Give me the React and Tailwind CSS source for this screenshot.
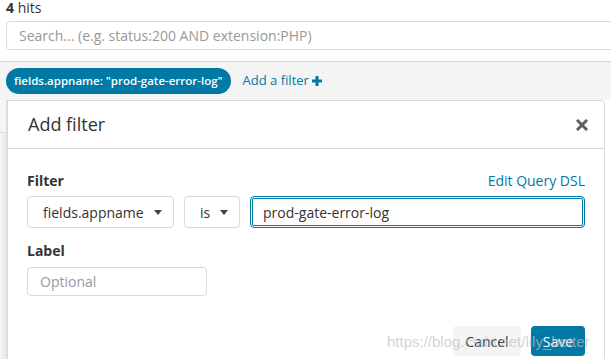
import React from "react";

const Caret = () => (
  <svg width="8" height="5" viewBox="0 0 8 5" className="shrink-0">
    <path d="M0 0h8L4 5z" fill="#444" />
  </svg>
);

const CloseIcon = () => (
  <svg width="12" height="12" viewBox="0 0 12 12">
    <path
      d="M2 2l8 8M10 2l-8 8"
      stroke="#5f5f5f"
      strokeWidth="3"
      strokeLinecap="square"
    />
  </svg>
);

const PlusIcon = () => (
  <svg width="10" height="10" viewBox="0 0 10 10" className="ml-[3px]">
    <path d="M5 0v10M0 5h10" stroke="#0079a5" strokeWidth="3" />
  </svg>
);

const App = () => {
  return (
    <div
      className="relative w-[611px] h-[359px] overflow-hidden bg-white text-[#333]"
      style={{ fontFamily: '"Open Sans", "Noto Sans", sans-serif' }}
    >
      <div className="px-[6px]">
        <div className="text-[14px] leading-[15px]">
          <span className="font-bold">4</span> hits
        </div>
        <div className="mt-[6px] w-[640px] h-[29px] border border-[#d9d9d9] rounded-[4px] flex items-center pl-[12px] text-[14px] text-[#999]">
          Search... (e.g. status:200 AND extension:PHP)
        </div>
      </div>

      <div className="mt-[11px] h-[39px] border-t border-[#d9d9d9] bg-[#f4f4f4] flex items-center px-[6px]">
        <div className="h-[26px] rounded-full bg-[#0079a5] text-white text-[11.5px] font-semibold flex items-center px-[8px] whitespace-nowrap">
          fields.appname: "prod-gate-error-log"
        </div>
        <div className="ml-[12px] flex items-center text-[13px] text-[#0079a5]">
          Add a filter
          <PlusIcon />
        </div>
      </div>

      <div className="flex h-[260px]">
        <div className="w-[7px] shrink-0 bg-gradient-to-r from-[#f7f7f7] to-[#e4e4e4] flex flex-col">
          <div className="h-[33px] border-b border-r border-[#dcdcdc] bg-[#f5f5f5]" />
        </div>
        <div className="w-[598px] shrink-0 border-l border-r border-t border-[#d9d9d9] rounded-tr-[4px] bg-white">
          <div className="h-[48px] border-b border-[#d9d9d9] flex items-center justify-between pl-[20px] pr-[16px]">
            <div className="text-[18px]">Add filter</div>
            <CloseIcon />
          </div>
          <div className="px-[19px] pt-[22px]">
            <div className="flex items-center justify-between text-[14px] leading-[20px]">
              <div className="font-bold">Filter</div>
              <div className="text-[#0079a5]">Edit Query DSL</div>
            </div>
            <div className="mt-[5px] flex gap-[10px] h-[32px] text-[14px]">
              <div className="w-[147px] border border-[#d9d9d9] rounded-[4px] flex items-center justify-between pl-[15px] pr-[11px]">
                fields.appname
                <Caret />
              </div>
              <div className="w-[56px] border border-[#d9d9d9] rounded-[4px] flex items-center justify-between pl-[15px] pr-[11px]">
                is
                <Caret />
              </div>
              <div className="flex-1 border border-[#0079a5] rounded-[4px] shadow-[inset_0_0_0_1px_#fff,inset_0_0_0_2px_#0079a5] flex items-center pl-[12px] text-[#333]">
                prod-gate-error-log
              </div>
            </div>
            <div className="mt-[13px] text-[14px] leading-[20px] font-bold">Label</div>
            <div className="mt-[6px] w-[180px] h-[29px] border border-[#d9d9d9] rounded-[4px] flex items-center pl-[12px] text-[14px] text-[#999]">
              Optional
            </div>
            <div className="mt-[30px] flex justify-end gap-[10px] text-[14px]">
              <div className="h-[30px] w-[68px] rounded-[4px] bg-[#f4f4f4] flex items-center justify-center">
                Cancel
              </div>
              <div className="h-[30px] w-[54px] rounded-[4px] bg-[#0079a5] text-white flex items-center justify-center">
                Save
              </div>
            </div>
          </div>
        </div>
        <div className="flex-1 bg-white" />
      </div>

      <div
        className="absolute left-[387px] top-[331px] text-[15px] text-[rgba(190,190,190,0.7)] pointer-events-none"
        style={{ fontFamily: '"Liberation Sans", Arial, sans-serif' }}
      >
        https://blog.csdn.net/lily_better
      </div>
    </div>
  );
};

export default App;
